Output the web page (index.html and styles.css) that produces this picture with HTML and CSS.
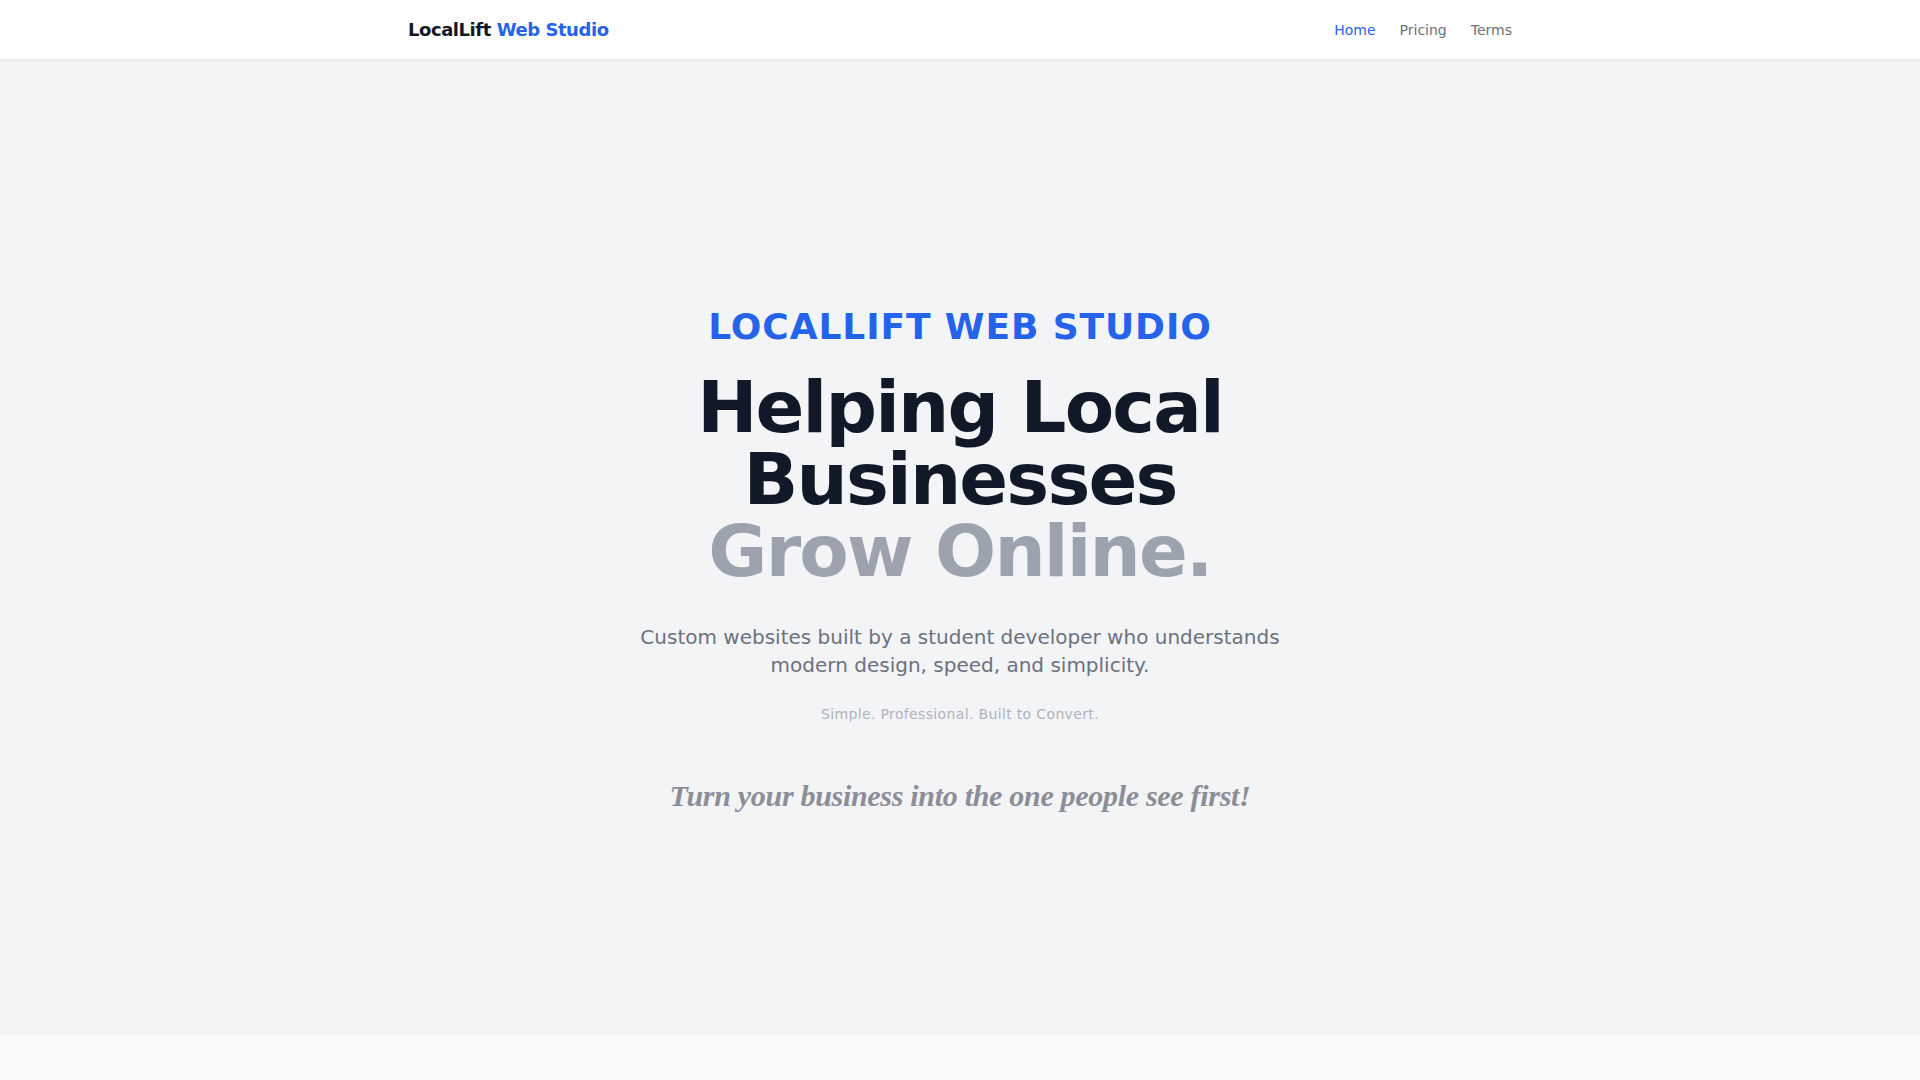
FILE: index.html
```html
<!DOCTYPE html>
<html lang="en">
<head>
<meta charset="utf-8">
<title>LocalLift Web Studio</title>
<link rel="stylesheet" href="styles.css">
</head>
<body>
<header class="site-header">
  <div class="container header-inner">
    <a class="logo" href="#">LocalLift <span class="logo-accent">Web Studio</span></a>
    <nav class="nav">
      <a class="nav-link active" href="#">Home</a>
      <a class="nav-link" href="#">Pricing</a>
      <a class="nav-link" href="#">Terms</a>
    </nav>
  </div>
</header>
<main>
  <section class="hero">
    <div class="hero-content">
      <p class="eyebrow">LOCALLIFT WEB STUDIO</p>
      <h1 class="headline">Helping Local<br>Businesses<br><span class="headline-muted">Grow Online.</span></h1>
      <p class="lead">Custom websites built by a student developer who understands modern design, speed, and simplicity.</p>
      <p class="tagline">Simple. Professional. Built to Convert.</p>
      <p class="slogan">Turn your business into the one people see first!</p>
    </div>
  </section>
  <section class="next-section"></section>
</main>
</body>
</html>
```

FILE: styles.css
```css
* { box-sizing: border-box; }
html, body { margin: 0; padding: 0; }
body {
  font-family: "DejaVu Sans", "Noto Sans", sans-serif;
  background: #f3f4f6;
  color: #111827;
}
a { text-decoration: none; }
p, h1 { margin: 0; }

.site-header {
  background: #ffffff;
  box-shadow: 0 1px 2px rgba(0, 0, 0, 0.06);
  border-bottom: 1px solid #eceef1;
  position: relative;
  z-index: 1;
}
.container {
  max-width: 1152px;
  margin: 0 auto;
  padding: 0 24px;
}
.header-inner {
  display: flex;
  align-items: center;
  justify-content: space-between;
  height: 59px;
}
.logo {
  font-size: 18px;
  font-weight: 700;
  letter-spacing: -0.025em;
  color: #111827;
  line-height: 28px;
}
.logo-accent { color: #2563eb; }
.nav {
  display: flex;
  gap: 24px;
}
.nav-link {
  font-size: 14px;
  line-height: 20px;
  color: #6b7280;
}
.nav-link.active { color: #2563eb; }

.hero {
  height: 975px;
  display: flex;
  align-items: center;
  justify-content: center;
  text-align: center;
  padding: 0 24px;
}
.hero-content {
  max-width: 768px;
  display: flex;
  flex-direction: column;
  align-items: center;
  margin-top: 26px;
}
.eyebrow {
  font-size: 36px;
  line-height: 40px;
  font-weight: 700;
  letter-spacing: 0.025em;
  color: #2563eb;
  margin-bottom: 24px;
}
.headline {
  font-size: 72px;
  line-height: 72px;
  font-weight: 700;
  letter-spacing: -0.025em;
  color: #111827;
  margin-bottom: 36px;
}
.headline-muted { color: #9ca3af; }
.lead {
  max-width: 672px;
  font-size: 20px;
  line-height: 28px;
  color: #6b7280;
  margin-bottom: 25px;
}
.tagline {
  font-size: 14px;
  line-height: 20px;
  color: #aeb3bb;
  letter-spacing: 0.025em;
  margin-bottom: 54px;
}
.slogan {
  font-family: "Liberation Serif", "Times New Roman", serif;
  font-style: italic;
  font-weight: 700;
  font-size: 30px;
  line-height: 36px;
  letter-spacing: -0.01em;
  color: #8b8e96;
}
.next-section {
  background: #f9fafb;
  height: 120px;
}
```
